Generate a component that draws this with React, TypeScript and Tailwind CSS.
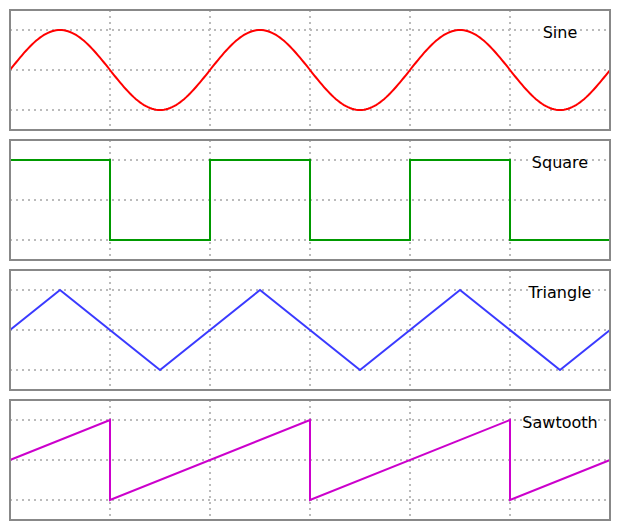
import React from "react";

const W = 600;
const H = 120;

function sinePath() {
  const pts: string[] = [];
  for (let x = 0; x <= W; x += 2) {
    const y = 60 - 40 * Math.sin((2 * Math.PI * x) / 200);
    pts.push(`${x === 0 ? "M" : "L"}${x},${y.toFixed(2)}`);
  }
  return pts.join(" ");
}

const waves = [
  { label: "Sine", color: "#ff0000", d: sinePath() },
  {
    label: "Square",
    color: "#009900",
    d: "M0,20 L100,20 L100,100 L200,100 L200,20 L300,20 L300,100 L400,100 L400,20 L500,20 L500,100 L600,100",
  },
  {
    label: "Triangle",
    color: "#3a3aff",
    d: "M0,60 L50,20 L150,100 L250,20 L350,100 L450,20 L550,100 L600,60",
  },
  {
    label: "Sawtooth",
    color: "#cc00cc",
    d: "M0,60 L100,20 L100,100 L300,20 L300,100 L500,20 L500,100 L600,60",
  },
];

function Panel({ label, color, d }: { label: string; color: string; d: string }) {
  return (
    <div className="relative w-[600px] h-[120px]">
      <svg
        width={W}
        height={H}
        viewBox={`0 0 ${W} ${H}`}
        className="absolute inset-0 overflow-visible"
      >
        <rect x={0} y={0} width={W} height={H} fill="#fff" />
        {[100, 200, 300, 400, 500].map((x) => (
          <line
            key={x}
            x1={x}
            y1={0}
            x2={x}
            y2={H}
            stroke="#bbbbbb"
            strokeWidth={2}
            strokeDasharray="2,4"
          />
        ))}
        {[20, 60, 100].map((y) => (
          <line
            key={y}
            x1={0}
            y1={y}
            x2={W}
            y2={y}
            stroke="#bbbbbb"
            strokeWidth={2}
            strokeDasharray="2,4"
          />
        ))}
        <path d={d} fill="none" stroke={color} strokeWidth={2} />
        <rect x={0} y={0} width={W} height={H} fill="none" stroke="#888888" strokeWidth={2} />
      </svg>
      <span
        className="absolute left-[550px] w-[0px] top-[13px] flex justify-center whitespace-nowrap text-[16px] leading-[20px] text-black"
        style={{ fontFamily: '"DejaVu Sans", sans-serif' }}
      >
        {label}
      </span>
    </div>
  );
}

export default function App() {
  return (
    <div className="w-[620px] h-[530px] bg-white p-[10px] flex flex-col gap-[10px]">
      {waves.map((w) => (
        <Panel key={w.label} {...w} />
      ))}
    </div>
  );
}
